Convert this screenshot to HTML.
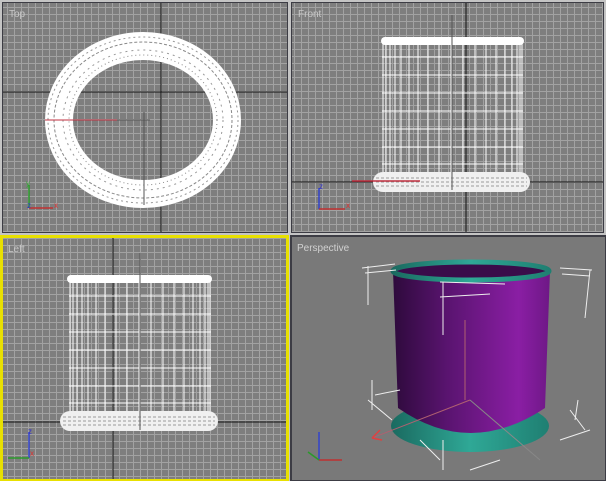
<!DOCTYPE html>
<html><head><style>
html,body{margin:0;padding:0;background:#c0c0c0;}
svg{display:block}
text{font-family:"Liberation Sans",sans-serif;}
</style></head><body>
<svg width="606" height="481" viewBox="0 0 606 481" xmlns="http://www.w3.org/2000/svg">
<defs>
<pattern id="g" width="7" height="7" patternUnits="userSpaceOnUse">
<rect width="7" height="7" fill="#7e7e7e"/>
<path d="M0 0.5H7M0.5 0V7" stroke="#a2a2a2" stroke-width="1"/>
</pattern>
<linearGradient id="pu" x1="0" x2="1">
<stop offset="0" stop-color="#2e0a3c"/>
<stop offset="0.35" stop-color="#5a1470"/>
<stop offset="0.8" stop-color="#8a1ea4"/>
<stop offset="1" stop-color="#6e1886"/>
</linearGradient>
<linearGradient id="tl" x1="0" x2="1">
<stop offset="0" stop-color="#1a6a60"/>
<stop offset="0.5" stop-color="#2fa896"/>
<stop offset="1" stop-color="#1f7f72"/>
</linearGradient>
</defs>
<rect width="606" height="481" fill="#c4c4c4"/>
<!-- Top viewport -->
<rect x="2" y="2" width="286" height="231" fill="#3c3c44"/>
<rect x="3" y="3" width="284" height="229" fill="url(#g)"/>
<path d="M3 92H287M161 3V232" stroke="#111" stroke-width="1"/>
<text x="9" y="17" font-size="10" fill="#c8c8c8">Top</text>
<g fill="none">
<ellipse cx="143" cy="120" rx="84" ry="74" stroke="#fff" stroke-width="28"/>
<ellipse cx="143" cy="120" rx="95" ry="83" stroke="#999" stroke-width="1" stroke-dasharray="2 3"/>
<ellipse cx="143" cy="120" rx="89" ry="78" stroke="#888" stroke-width="1" stroke-dasharray="3 2"/>
<ellipse cx="143" cy="120" rx="80" ry="70" stroke="#999" stroke-width="1" stroke-dasharray="2 4"/>
<ellipse cx="143" cy="120" rx="74" ry="65" stroke="#888" stroke-width="1" stroke-dasharray="1 3"/>
</g>
<path d="M45 120H117" stroke="#c03040" stroke-width="1"/>
<path d="M117 120H150M144 112V205" stroke="#555" stroke-width="1"/>
<path d="M29 208V185" stroke="#2a9a2a" stroke-width="1.5"/>
<path d="M29 208H53" stroke="#c03030" stroke-width="1.5"/>
<text x="26" y="186" font-size="8" fill="#3a3">y</text>
<text x="54" y="208" font-size="8" fill="#d33">x</text>
<text x="27" y="208" font-size="8" fill="#33c">z</text>
<!-- Front viewport -->
<rect x="291" y="2" width="313" height="231" fill="#3c3c44"/>
<rect x="292" y="3" width="311" height="229" fill="url(#g)"/>
<path d="M292 182H603M466 3V232" stroke="#111" stroke-width="1"/>
<text x="298" y="17" font-size="10" fill="#c8c8c8">Front</text>
<g stroke="#fff" stroke-width="1" fill="none">
<path d="M383 44V174M386 44V174M390 44V174M395 44V174M401 44V174M409 44V174M418 44V174M428 44V174M439 44V174M451 44V174M463 44V174M475 44V174M486 44V174M496 44V174M505 44V174M512 44V174M517 44V174M520 44V174M522 44V174"/>
<path d="M382 57H523M382 75H523M382 93H523M382 111H523M382 129H523M382 147H523M382 164H523"/>
</g>
<rect x="381" y="37" width="143" height="8" rx="4" fill="#fff"/>
<rect x="373" y="172" width="157" height="20" rx="10" fill="#f0f0f0"/>
<path d="M376 178H527M376 182H527M376 186H527" stroke="#9a9a9a" stroke-width="1" stroke-dasharray="3 2"/>
<path d="M352 181H420" stroke="#c03040" stroke-width="1.5"/>
<path d="M452 15V190" stroke="#555"/>
<path d="M319 209V188" stroke="#3344cc" stroke-width="1.5"/>
<path d="M319 209H345" stroke="#c03030" stroke-width="1.5"/>
<text x="319" y="189" font-size="8" fill="#33c">z</text>
<text x="346" y="208" font-size="8" fill="#d33">x</text>
<!-- Left viewport -->
<rect x="0" y="235" width="289" height="246" fill="#e8e000"/>
<rect x="3" y="238" width="283" height="241" fill="url(#g)"/>
<path d="M3 422H286M113 238V479" stroke="#111" stroke-width="1"/>
<text x="8" y="252" font-size="10" fill="#c8c8c8">Left</text>
<g stroke="#fff" stroke-width="1" fill="none">
<path d="M70 282V412M73 282V412M77 282V412M82 282V412M88 282V412M96 282V412M105 282V412M116 282V412M127 282V412M139 282V412M151 282V412M163 282V412M174 282V412M184 282V412M193 282V412M200 282V412M205 282V412M208 282V412M210 282V412"/>
<path d="M69 296H211M69 314H211M69 332H211M69 350H211M69 368H211M69 386H211M69 403H211"/>
</g>
<rect x="67" y="275" width="145" height="8" rx="4" fill="#fff"/>
<rect x="60" y="411" width="158" height="20" rx="10" fill="#f0f0f0"/>
<path d="M63 417H215M63 421H215M63 425H215" stroke="#9a9a9a" stroke-width="1" stroke-dasharray="3 2"/>
<path d="M140 253V430" stroke="#555"/>
<path d="M29 458V432" stroke="#3344cc" stroke-width="1.5"/>
<path d="M8 458H29" stroke="#2a9a2a" stroke-width="1.5"/>
<text x="28" y="434" font-size="8" fill="#33c">z</text>
<text x="30" y="456" font-size="8" fill="#d33">x</text>
<!-- Perspective -->
<rect x="290" y="235" width="316" height="246" fill="#3c3c44"/>
<rect x="292" y="237" width="313" height="243" fill="#797979"/>
<text x="297" y="251" font-size="10" fill="#d0d0d0">Perspective</text>
<ellipse cx="470" cy="426" rx="79" ry="26" fill="url(#tl)"/>
<path d="M393 271L398 408Q470 458 545 408L550 271Z" fill="url(#pu)"/>
<ellipse cx="471" cy="271" rx="78" ry="9" fill="#3a0c4a" stroke="url(#tl)" stroke-width="5"/>
<g stroke="#eee" stroke-width="1" fill="none">
<path d="M362 268L395 264M365 273L396 270M368 266V305M440 282L505 284M443 282V335M440 297L490 294"/>
<path d="M560 268L592 270M562 274L590 276M590 270L585 318"/>
<path d="M375 395L400 390M368 400L392 420M372 380V410M440 460L420 440M470 470L500 460M443 440V470M570 410L585 430M578 400L575 420M560 440L590 430"/>
</g>
<path d="M465 320V400M470 400L372 438" stroke="#b06070" stroke-width="1"/>
<path d="M372 438L380 430M372 438L382 440" stroke="#e04040" stroke-width="1.5"/>
<path d="M470 400L540 460" stroke="#888" stroke-width="1"/>
<path d="M319 460V432" stroke="#3344cc" stroke-width="1.5"/>
<path d="M319 460H342" stroke="#c03030" stroke-width="1.5"/>
<path d="M319 460L308 452" stroke="#2a9a2a" stroke-width="1.5"/>
</svg>
</body></html>
